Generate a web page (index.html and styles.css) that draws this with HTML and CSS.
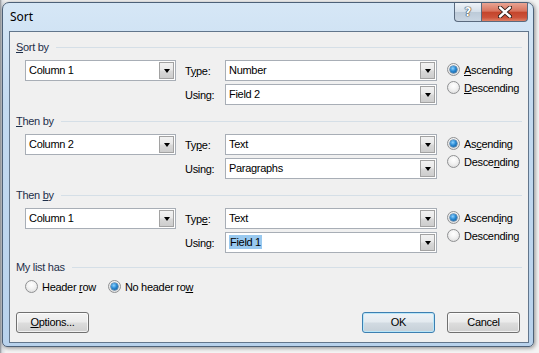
FILE: index.html
```html
<!DOCTYPE html>
<html>
<head>
    <title>Sort</title>
    <meta charset="utf-8" />
    <link rel="stylesheet" href="styles.css">
</head>
<body>
    <div class="window">
        <div class="titlebar">
            <span class="title">Sort</span>
            <div class="caption">
                <div class="caption-btn help">?</div>
                <div class="caption-btn close">
                    <svg width="14" height="12" viewBox="0 0 14 12">
                        <path d="M2 1.5 L12 10.5 M12 1.5 L2 10.5" stroke="#2b1a14" stroke-width="4.2" stroke-linecap="round"/>
                        <path d="M2 1.5 L12 10.5 M12 1.5 L2 10.5" stroke="#ffffff" stroke-width="2.4" stroke-linecap="round"/>
                    </svg>
                </div>
            </div>
        </div>

        <div class="client">

            <div class="group">
                <div class="group-title"><span><u>S</u>ort by</span></div>
                <div class="sort-row">
                    <div class="combo key"><span class="value">Column 1</span><span class="drop"></span></div>
                    <div class="fields">
                        <span class="label">T<u>y</u>pe:</span>
                        <div class="combo"><span class="value">Number</span><span class="drop"></span></div>
                        <span class="label">Using:</span>
                        <div class="combo"><span class="value">Field 2</span><span class="drop"></span></div>
                    </div>
                    <div class="order">
                        <div class="radio"><span class="dot checked"></span><span><u>A</u>scending</span></div>
                        <div class="radio"><span class="dot"></span><span><u>D</u>escending</span></div>
                    </div>
                </div>
            </div>

            <div class="group">
                <div class="group-title"><span><u>T</u>hen by</span></div>
                <div class="sort-row">
                    <div class="combo key"><span class="value">Column 2</span><span class="drop"></span></div>
                    <div class="fields">
                        <span class="label">Ty<u>p</u>e:</span>
                        <div class="combo"><span class="value">Text</span><span class="drop"></span></div>
                        <span class="label">Using:</span>
                        <div class="combo"><span class="value">Paragraphs</span><span class="drop"></span></div>
                    </div>
                    <div class="order">
                        <div class="radio"><span class="dot checked"></span><span>As<u>c</u>ending</span></div>
                        <div class="radio"><span class="dot"></span><span>Desce<u>n</u>ding</span></div>
                    </div>
                </div>
            </div>

            <div class="group">
                <div class="group-title"><span>Then <u>b</u>y</span></div>
                <div class="sort-row">
                    <div class="combo key"><span class="value">Column 1</span><span class="drop"></span></div>
                    <div class="fields">
                        <span class="label">Typ<u>e</u>:</span>
                        <div class="combo"><span class="value">Text</span><span class="drop"></span></div>
                        <span class="label">Using:</span>
                        <div class="combo"><span class="value"><span class="selected">Field 1</span></span><span class="drop"></span></div>
                    </div>
                    <div class="order">
                        <div class="radio"><span class="dot checked"></span><span>Ascend<u>i</u>ng</span></div>
                        <div class="radio"><span class="dot"></span><span>Descendin<u>g</u></span></div>
                    </div>
                </div>
            </div>

            <div class="group last">
                <div class="group-title"><span>My list has</span></div>
                <div class="list-has">
                    <div class="radio"><span class="dot"></span><span>Header <u>r</u>ow</span></div>
                    <div class="radio"><span class="dot checked"></span><span>No header ro<u>w</u></span></div>
                </div>
            </div>

            <div class="footer">
                <div class="btn"><u>O</u>ptions...</div>
                <div class="btn default push">OK</div>
                <div class="btn">Cancel</div>
            </div>

        </div>
    </div>
</body>
</html>
```

FILE: styles.css
```css
html, body { margin: 0; padding: 0; }

body {
    width: 539px;
    height: 353px;
    overflow: hidden;
    background: linear-gradient(to right, #8c8f94 0, #d9dde2 2px, #f4f4f4 6px);
    font-family: "Liberation Sans", Arial, sans-serif;
    font-size: 11px;
    letter-spacing: -0.3px;
    color: #000;
}

u { text-decoration: underline; text-underline-offset: 1px; }

/* Window frame */
.window {
    box-sizing: border-box;
    width: 532px;
    height: 345px;
    margin: 2px 0 0 2px;
    border: 1px solid #4d6178;
    border-radius: 7px 7px 5px 5px;
    background: linear-gradient(to bottom, #d6e7f6 0%, #c3daf0 30%, #b8d2ec 100%);
    box-shadow: 1px 1px 4px rgba(0, 0, 0, 0.45);
    display: flex;
    flex-direction: column;
}

.titlebar {
    height: 28px;
    display: flex;
    align-items: flex-start;
}

.title {
    font-family: "Noto Sans", "Open Sans", sans-serif;
    font-size: 12px;
    letter-spacing: 0;
    line-height: 28px;
    padding-left: 7px;
}

.caption {
    margin-left: auto;
    margin-right: 5px;
    display: flex;
}

.caption-btn {
    box-sizing: border-box;
    height: 19px;
    border: 1px solid #5a6a7e;
    border-top: 0;
    display: flex;
    align-items: center;
    justify-content: center;
}

.help {
    width: 27px;
    border-right: 0;
    border-radius: 0 0 0 4px;
    background: linear-gradient(to bottom, #eef3f8 0%, #d5dfe9 48%, #bccad8 52%, #c9d6e3 100%);
    font-family: "DejaVu Sans", sans-serif;
    font-weight: bold;
    font-size: 12px;
    letter-spacing: 0;
    color: #fff;
    text-shadow: 0 0 1px #333, 0 0 1px #333, 0 0 1px #333;
}

.close {
    width: 47px;
    border-radius: 0 0 4px 0;
    background: linear-gradient(to bottom, #e8a493 0%, #d8735d 45%, #c4452c 52%, #cc523a 80%, #de8166 100%);
}

/* Client area */
.client {
    box-sizing: border-box;
    height: 312px;
    margin: 0 4px 0 6px;
    border: 1px solid #62768c;
    background: #f0f0f0;
    padding: 8px 6px 9px 6px;
    display: flex;
    flex-direction: column;
}

.group { margin-bottom: 9px; }
.group.last { margin-top: -2px; }

.group-title {
    display: flex;
    align-items: center;
    height: 14px;
    color: #1e2f4a;
}

.group-title::after {
    content: "";
    flex: 1;
    height: 1px;
    margin-left: 7px;
    background: #d5dfe7;
}

.sort-row {
    display: flex;
    align-items: flex-start;
    margin-top: 6px;
    padding-left: 9px;
}

/* Combo boxes */
.combo {
    box-sizing: border-box;
    height: 21px;
    border: 1px solid #a8aeb6;
    background: #fff;
    padding: 1px;
    display: flex;
}

.combo .value {
    flex: 1;
    padding-left: 2px;
    line-height: 17px;
    white-space: nowrap;
}

.key { width: 151px; margin-right: 9px; }

.drop {
    box-sizing: border-box;
    width: 15px;
    border: 1px solid #a2a2a2;
    background: linear-gradient(to bottom, #f2f2f2 0%, #e8e8e8 48%, #d9d9d9 52%, #cdcdcd 100%);
    display: flex;
    align-items: center;
    justify-content: center;
}

.drop::after {
    content: "";
    border-left: 3.5px solid transparent;
    border-right: 3.5px solid transparent;
    border-top: 4px solid #000;
}

.selected { background: #99c9ef; padding: 1px 1px; }

.fields {
    display: grid;
    grid-template-columns: 40px 212px;
    row-gap: 3px;
    align-items: center;
}

.order {
    display: flex;
    flex-direction: column;
    gap: 5px;
    margin-left: 10px;
    padding-top: 3px;
}

/* Radio buttons */
.radio {
    display: flex;
    align-items: center;
    height: 13px;
}

.dot {
    box-sizing: border-box;
    width: 13px;
    height: 13px;
    margin-right: 4px;
    border-radius: 50%;
    border: 1px solid #8f9092;
    background: radial-gradient(circle at 50% 35%, #ffffff 0%, #f2f2f2 45%, #d6d6d6 100%);
    display: flex;
    align-items: center;
    justify-content: center;
}

.dot.checked::after {
    content: "";
    width: 7px;
    height: 7px;
    border-radius: 50%;
    background: radial-gradient(circle at 40% 35%, #8fd3ff 0%, #2a8ad4 45%, #0d4f8b 100%);
    box-shadow: 0 0 0 0.5px #1c5180;
}

.list-has {
    display: flex;
    gap: 12px;
    margin-top: 6px;
    padding-left: 9px;
}

/* Buttons */
.footer {
    margin-top: auto;
    display: flex;
    gap: 12px;
    padding-right: 2px;
}

.btn {
    box-sizing: border-box;
    width: 73px;
    height: 21px;
    border: 1px solid #707070;
    border-radius: 3px;
    background: linear-gradient(to bottom, #f3f3f3 0%, #ebebeb 48%, #dddddd 52%, #cfcfcf 100%);
    box-shadow: inset 0 0 0 1px rgba(255, 255, 255, 0.7);
    text-align: center;
    line-height: 19px;
}

.btn.default {
    border-color: #3c7fb1;
    box-shadow: inset 0 0 0 1px #b9e6f8;
    background: linear-gradient(to bottom, #eef3f7 0%, #e3eaef 48%, #d2dbe2 52%, #c6d0d8 100%);
}

.push { margin-left: auto; }
```
